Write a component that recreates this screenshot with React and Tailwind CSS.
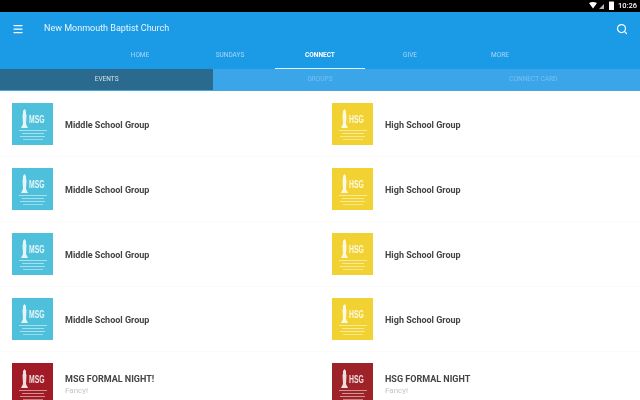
import { Menu, Search } from 'lucide-react'

const tabs = ['HOME', 'SUNDAYS', 'CONNECT', 'GIVE', 'MORE']

const rows = [
  { title: 'Middle School Group', bg: 'bg-[#4fc0dc]', tag: 'MSG' },
  { title: 'High School Group', bg: 'bg-[#f2d232]', tag: 'HSG' },
  { title: 'Middle School Group', bg: 'bg-[#4fc0dc]', tag: 'MSG' },
  { title: 'High School Group', bg: 'bg-[#f2d232]', tag: 'HSG' },
  { title: 'Middle School Group', bg: 'bg-[#4fc0dc]', tag: 'MSG' },
  { title: 'High School Group', bg: 'bg-[#f2d232]', tag: 'HSG' },
  { title: 'Middle School Group', bg: 'bg-[#4fc0dc]', tag: 'MSG' },
  { title: 'High School Group', bg: 'bg-[#f2d232]', tag: 'HSG' },
  { title: 'MSG FORMAL NIGHT!', sub: 'Fancy!', bg: 'bg-[#a01b25]', tag: 'MSG' },
  { title: 'HSG FORMAL NIGHT', sub: 'Fancy!', bg: 'bg-[#9e2329]', tag: 'HSG' },
]

function StatusIcons() {
  return (
    <svg width="26" height="10" viewBox="0 0 26 10" fill="white">
      <path d="M0 2 Q4 0 8 2 L4 7.5 Z" />
      <path d="M10 8 L15 3 L15 8 Z" opacity="0.7" />
      <rect x="20" y="0.5" width="5" height="8.5" rx="0.5" />
    </svg>
  )
}

function Logo({ bg, tag }) {
  return (
    <div className={`${bg} w-[41px] h-[42px] shrink-0 flex flex-col items-center pt-[6px]`}>
      <div className="flex flex-col items-center blur-[0.7px] opacity-85">
        <div className="flex items-end gap-[1px]">
          <svg width="7" height="19" viewBox="0 0 7 19" fill="white">
            <path d="M3.5 0 L5 2 L5 5 L5.5 6 L5 15 L7 19 L0 19 L2 15 L1.5 6 L2 5 L2 2 Z" />
          </svg>
          <span className="w-[15px] mb-[3px] text-white font-bold text-[11px] leading-[11px] font-['Liberation_Sans',sans-serif] origin-left scale-x-[0.62]">
            {tag}
          </span>
        </div>
        <div className="mt-[2px] w-[28px] flex flex-col items-center gap-[2px]">
          <div className="w-full h-px bg-white/60" />
          <div className="w-[22px] h-px bg-white/60" />
          <div className="w-[25px] h-px bg-white/60" />
          <div className="w-[20px] h-px bg-white/50" />
        </div>
      </div>
    </div>
  )
}

function Row({ title, sub, bg, tag }) {
  return (
    <div className="h-[65px] flex items-center gap-3 pl-3 border-b border-[#fbfbfb]">
      <Logo bg={bg} tag={tag} />
      <div className="min-w-0 mt-[1px] blur-[0.4px]">
        <div className="text-[9px] leading-3 font-bold text-[#444]">{title}</div>
        {sub && <div className="text-[8px] leading-3 text-[#c4c4c4]">{sub}</div>}
      </div>
    </div>
  )
}

export default function App() {
  return (
    <div className="w-[640px] h-[400px] overflow-hidden bg-white font-['Roboto',sans-serif]">
      <div className="h-3 bg-black flex items-center justify-end pr-[3px] gap-[3px]">
        <StatusIcons />
        <span className="text-white text-[7.5px] leading-none font-medium blur-[0.2px]">10:26</span>
      </div>

      <div className="h-[57px] bg-[#1b9ae6] flex flex-col">
        <div className="h-[34px] flex items-center pl-3 pr-3 text-white">
          <Menu size={12} strokeWidth={2.5} />
          <span className="ml-5 text-[9px] blur-[0.4px] text-white/90">New Monmouth Baptist Church</span>
          <Search size={12} strokeWidth={2.5} className="ml-auto" />
        </div>
        <div className="flex-1 flex justify-center">
          {tabs.map((t) => (
            <div
              key={t}
              className={`w-[90px] pb-[3px] flex items-center justify-center text-[6.5px] blur-[0.4px] border-b-[1.5px] ${
                t === 'CONNECT' ? 'text-white font-bold border-[#dff2ff]' : 'text-white/60 border-transparent'
              }`}
            >
              {t}
            </div>
          ))}
        </div>
      </div>

      <div className="h-[22px] grid grid-cols-3 text-[6.5px] border-b border-[#4aa8e0]">
        <div className="bg-[#2a6a8e] flex items-center justify-center">
          <span className="text-white/80 blur-[0.3px]">EVENTS</span>
        </div>
        <div className="bg-[#3ba5ea] flex items-center justify-center">
          <span className="text-white/30 blur-[0.4px]">GROUPS</span>
        </div>
        <div className="bg-[#3ba5ea] flex items-center justify-center">
          <span className="text-white/30 blur-[0.4px]">CONNECT CARD</span>
        </div>
      </div>

      <div className="grid grid-cols-2 pt-px">
        {rows.map((r, i) => (
          <Row key={i} {...r} />
        ))}
      </div>
    </div>
  )
}
